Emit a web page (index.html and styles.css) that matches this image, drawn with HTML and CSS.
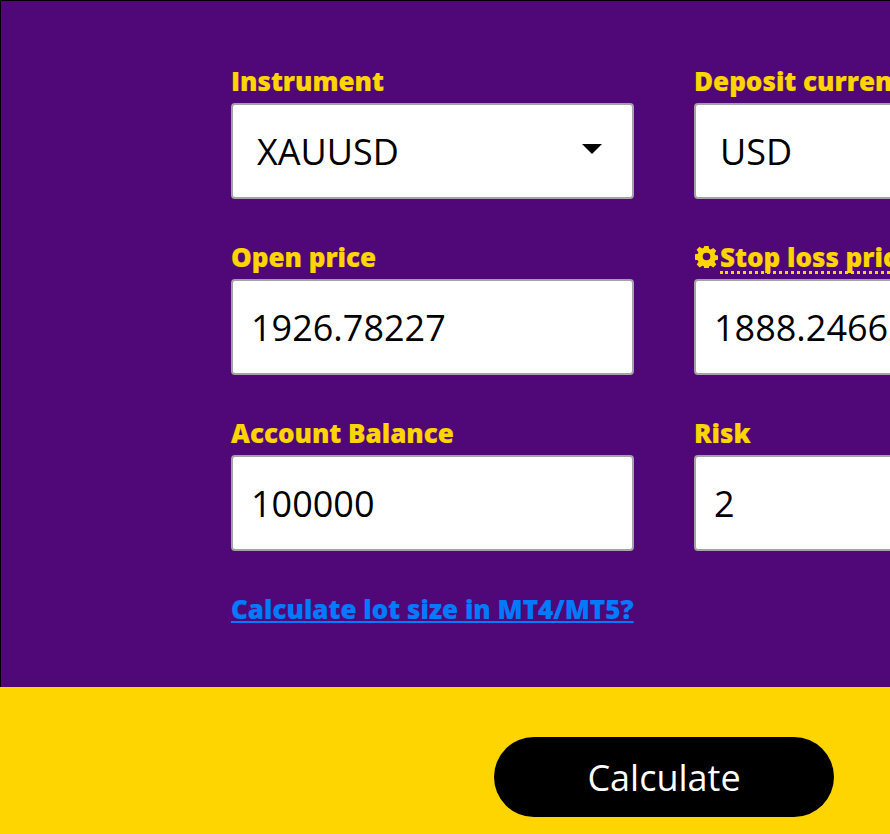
FILE: index.html
```html
<!DOCTYPE html>
<html lang="en">

<head>
    <meta charset="UTF-8">
    <meta name="viewport" content="width=device-width, initial-scale=1.0">
    <title>Position size calculator</title>
    <link rel="stylesheet" href="styles.css">
</head>

<body>
    <div class="calculator">
        <form class="fields">
            <div class="field">
                <label>Instrument</label>
                <div class="select_box">
                    <select>
                        <option>XAUUSD</option>
                    </select>
                    <span class="caret"></span>
                </div>
            </div>
            <div class="field">
                <label>Deposit currency</label>
                <div class="select_box">
                    <select>
                        <option>USD</option>
                    </select>
                    <span class="caret"></span>
                </div>
            </div>
            <div class="field">
                <label>Open price</label>
                <input type="text" value="1926.78227">
            </div>
            <div class="field">
                <label class="with_icon">
                    <svg class="gear" viewBox="0 0 24 24">
                        <path fill-rule="evenodd" d="M9.8 1h4.4l.6 3.1 1.6.7 2.7-1.8 3.1 3.1-1.8 2.7.7 1.6 3.1.6v4.4l-3.1.6-.7 1.6 1.8 2.7-3.1 3.1-2.7-1.8-1.6.7-.6 3.1H9.8l-.6-3.1-1.6-.7-2.7 1.8-3.1-3.1 1.8-2.7-.7-1.6-3.1-.6V9.8l3.1-.6.7-1.6L1.6 4.9l3.1-3.1 2.7 1.8 1.6-.7zM12 8a4 4 0 1 0 0 8 4 4 0 0 0 0-8z"/>
                    </svg>
                    <span class="dotted">Stop loss price</span>
                </label>
                <input type="text" value="1888.24662">
            </div>
            <div class="field">
                <label>Account Balance</label>
                <input type="text" value="100000">
            </div>
            <div class="field">
                <label>Risk</label>
                <input type="text" value="2">
            </div>
            <a class="lot_link" href="#">Calculate lot size in MT4/MT5?</a>
        </form>
    </div>
    <div class="actions">
        <button type="button" class="calculate">Calculate</button>
    </div>
</body>

</html>
```

FILE: styles.css
```css
* {
    margin: 0;
    padding: 0;
    box-sizing: border-box;
}

html,
body {
    width: 890px;
    height: 834px;
    overflow: hidden;
}

body {
    font-family: "Open Sans", "Liberation Sans", sans-serif;
    background-color: #ffd500;
}

.calculator {
    width: 1200px;
    height: 687px;
    padding: 66px 0 0 230px;
    border-top: 1px solid #000;
    border-left: 1px solid #000;
    background-color: #500878;
}

.fields {
    display: grid;
    grid-template-columns: 403px 403px;
    column-gap: 60px;
    row-gap: 44px;
    align-items: start;
}

.field label {
    display: block;
    height: 36px;
    font-size: 26px;
    line-height: 28px;
    font-weight: 800;
    color: #ffd500;
    white-space: nowrap;
    -webkit-text-stroke: 0.2px #ffd500;
}

.field .with_icon {
    display: flex;
    align-items: flex-start;
}

.gear {
    width: 23px;
    height: 23px;
    margin: 2px 2px 0 1px;
    fill: #ffd500;
}

.dotted {
    height: 31px;
    border-bottom: 3px dotted #ffd500;
}

.field input,
.select_box select {
    display: block;
    width: 100%;
    height: 96px;
    border: 2px solid #a3a3a3;
    border-radius: 4px;
    background-color: #fff;
    font-family: inherit;
    font-size: 36px;
    color: #000;
    outline: none;
}

.field input {
    padding: 1px 0 0 18px;
}

.select_box {
    position: relative;
}

.select_box select {
    padding-left: 24px;
    appearance: none;
}

.caret {
    position: absolute;
    top: 41px;
    right: 32px;
    width: 0;
    height: 0;
    border-top: 10px solid #000;
    border-left: 10px solid transparent;
    border-right: 10px solid transparent;
}

.lot_link {
    grid-column: 1;
    width: 403px;
    margin-top: -1px;
    font-size: 26px;
    line-height: 30px;
    font-weight: 800;
    color: #007bff;
    white-space: nowrap;
    -webkit-text-stroke: 0.2px #007bff;
}

.actions {
    display: flex;
    justify-content: flex-end;
    padding: 50px 56px 0 0;
}

.calculate {
    width: 340px;
    height: 80px;
    border: none;
    border-radius: 40px;
    background-color: #000;
    font-family: inherit;
    font-size: 36px;
    color: #fff;
}
```
